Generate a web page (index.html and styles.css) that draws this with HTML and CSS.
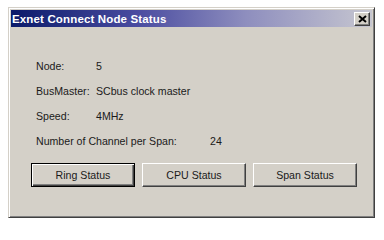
FILE: index.html
```html
<!DOCTYPE html>
<html>
<head>
<meta charset="utf-8">
<link rel="stylesheet" href="styles.css">
</head>
<body>
<div class="window">
  <div class="titlebar">
    <span class="title">Exnet Connect Node Status</span>
    <span class="close">
      <svg width="9" height="8" viewBox="0 0 9 8"><path d="M1 1 L8 7 M8 1 L1 7" stroke="#000" stroke-width="2" fill="none"/></svg>
    </span>
  </div>
  <div class="content">
    <div class="info">
      <span class="label">Node:</span><span>5</span>
      <span class="label">BusMaster:</span><span>SCbus clock master</span>
      <span class="label">Speed:</span><span>4MHz</span>
      <span class="label wide">Number of Channel per Span:</span><span>24</span>
    </div>
    <div class="buttons">
      <button class="btn default">Ring Status</button>
      <button class="btn">CPU Status</button>
      <button class="btn">Span Status</button>
    </div>
  </div>
</div>
</body>
</html>
```

FILE: styles.css
```css
html, body {
  margin: 0;
  padding: 0;
  background: #ffffff;
}

.window {
  margin: 7px 0 0 8px;
  width: 367px;
  height: 211px;
  box-sizing: border-box;
  background: #d4d0c8;
  border: 1px solid;
  border-color: #d4d0c8 #404040 #404040 #d4d0c8;
  box-shadow: inset 1px 1px #ffffff, inset -1px -1px #808080;
  padding: 2px;
  font-family: "Liberation Sans", Arial, sans-serif;
}

.titlebar {
  height: 17px;
  display: flex;
  align-items: center;
  justify-content: space-between;
  background: linear-gradient(to right, #0a1a6a 0%, #4a4ca0 35%, #8e8ebe 65%, #c6c6d0 100%);
  padding: 0 2px 0 1px;
}

.title {
  color: #ffffff;
  font-weight: bold;
  font-size: 11.5px;
  letter-spacing: 0.15px;
}

.close {
  width: 16px;
  height: 14px;
  box-sizing: border-box;
  background: #d4d0c8;
  border: 1px solid;
  border-color: #ffffff #404040 #404040 #ffffff;
  box-shadow: inset -1px -1px #808080;
  display: flex;
  align-items: center;
  justify-content: center;
}

.close svg {
  display: block;
}

.content {
  padding: 33px 0 0 25px;
  font-size: 10.6px;
  color: #1a1a1a;
}

.info {
  display: grid;
  grid-template-columns: 60px auto;
  grid-auto-rows: 13px;
  row-gap: 12px;
  line-height: 13px;
}

.label.wide {
  width: 174px;
}

.info .wide + span {
  margin-left: 114px;
}

.buttons {
  display: flex;
  gap: 7px;
  margin: 15px 0 0 -5px;
}

.btn {
  width: 104px;
  height: 24px;
  box-sizing: border-box;
  background: #d4d0c8;
  font-family: "Liberation Sans", Arial, sans-serif;
  font-size: 10.6px;
  color: #1a1a1a;
  padding: 0;
  border: 1px solid;
  border-color: #ffffff #404040 #404040 #ffffff;
  box-shadow: inset -1px -1px #808080;
}

.btn.default {
  border: 1px solid #000000;
  box-shadow: inset 1px 1px #ffffff, inset -1px -1px #404040, inset -2px -2px #808080;
}
```
